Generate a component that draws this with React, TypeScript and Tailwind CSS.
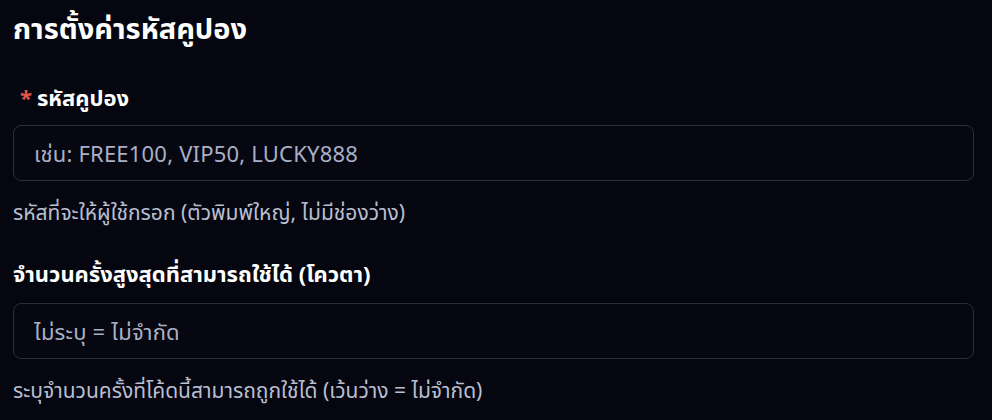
import React from "react";

export default function App() {
  return (
    <div
      className="min-h-screen w-full bg-[#05060f] text-white px-[13px] pt-[8px]"
      style={{ fontFamily: '"Noto Sans", "Noto Sans Thai", "Noto Sans CJK SC", sans-serif' }}
    >
      <h1 className="text-[29px] font-bold leading-[40px] mb-[34px]">การตั้งค่ารหัสคูปอง</h1>

      <div className="mb-[32px]">
        <label className="block text-[22px] font-bold leading-[30px] mb-[13px] pl-[7px]">
          <span className="text-[#e5534b] mr-[5px]">*</span>รหัสคูปอง
        </label>
        <input
          className="w-[961px] h-[56px] rounded-[8px] border border-[#2a2c38] bg-[#060710] px-[20px] text-[22px] tracking-[0.2px] text-white placeholder:text-[#a9b0c6] outline-none"
          placeholder="เช่น: FREE100, VIP50, LUCKY888"
        />
        <p className="mt-[17px] text-[21px] leading-[28px] text-[#b8bfd1]">
          รหัสที่จะให้ผู้ใช้กรอก (ตัวพิมพ์ใหญ่, ไม่มีช่องว่าง)
        </p>
      </div>

      <div>
        <label className="block text-[22px] font-bold leading-[30px] mb-[15px]">
          จำนวนครั้งสูงสุดที่สามารถใช้ได้ (โควตา)
        </label>
        <input
          className="w-[961px] h-[56px] rounded-[8px] border border-[#2a2c38] bg-[#060710] px-[20px] text-[22px] tracking-[0.2px] text-white placeholder:text-[#a9b0c6] outline-none"
          placeholder="ไม่ระบุ = ไม่จำกัด"
        />
        <p className="mt-[17px] text-[21px] leading-[28px] text-[#b8bfd1]">
          ระบุจำนวนครั้งที่โค้ดนี้สามารถถูกใช้ได้ (เว้นว่าง = ไม่จำกัด)
        </p>
      </div>
    </div>
  );
}
